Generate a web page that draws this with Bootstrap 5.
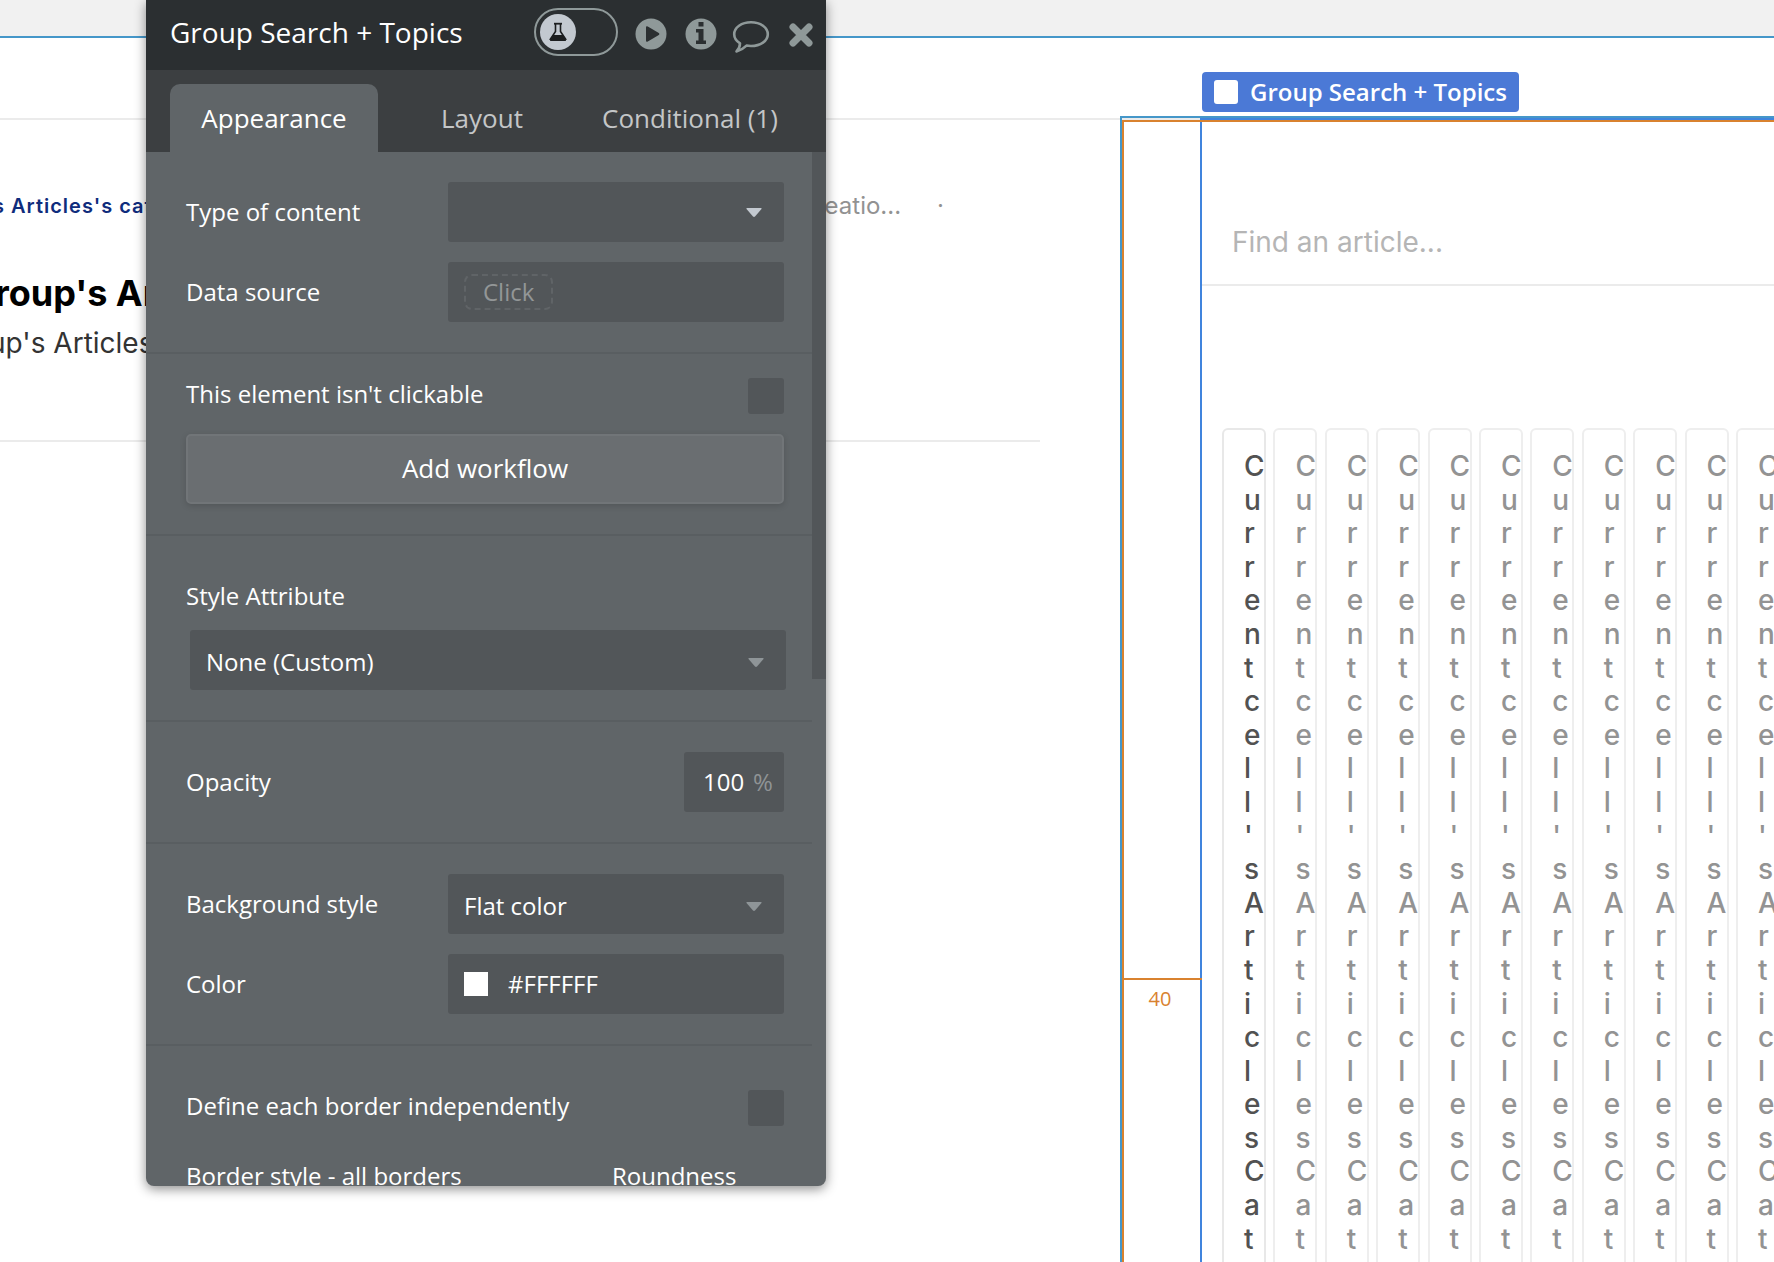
<!DOCTYPE html>
<html lang="en">
<head>
<meta charset="utf-8">
<meta name="viewport" content="width=device-width, initial-scale=1">
<title>Group Search + Topics</title>
<link href="https://cdn.jsdelivr.net/npm/bootstrap@5.3.0/dist/css/bootstrap.min.css" rel="stylesheet">
<style>
  :root {
    --line: #ebebeb;
    --outline: #4597c9;
    --select: #4084dd;
    --spacing: #d9822f;
    --field: #525659;
    --surface: #606568;
    --icon: #8f9999;
  }
  body { font-family: Inter, "Liberation Sans", sans-serif; background: #fff; color: #000; }

  /* Canvas */
  .stage { height: 100vh; }
  .stage-top { height: 38px; background: #f1f1f1; border-bottom: 2px solid var(--outline); }
  .page-head { height: 82px; border-bottom: 2px solid var(--line); }
  .article { height: 322px; padding-top: 71px; margin-right: 80px; border-bottom: 2px solid var(--line); white-space: nowrap; }
  .article-meta { font-size: 24px; line-height: 30px; color: #929292; padding-right: 96px; }
  .article-cat { font-size: 20px; font-weight: 600; letter-spacing: 1px; color: #0f2c7c; margin-left: -7px; }
  .article-title { font-size: 36px; font-weight: 700; line-height: 44px; margin: 50px 0 0 -5px; }
  .article-text { font-size: 28px; line-height: 34px; color: #333; margin: 11px 0 0 -11px; }
  .dot-gap { gap: 36px; }

  /* Selected column */
  .side { width: 654px; margin-top: -4px; border-left: 2px solid var(--outline); border-top: 2px solid var(--outline); }
  .spacing-frame { inset: 2px 0 0 0; border-left: 2px solid var(--spacing); border-top: 2px solid var(--spacing); pointer-events: none; }
  .spacing-mark { top: 860px; left: 2px; width: 78px; border-top: 2px solid var(--spacing); color: var(--spacing); font: 20px/26px "Open Sans", sans-serif; padding: 6px 6px 0 0; }
  .group { margin-left: 78px; border-left: 2px solid var(--select); border-top: 2px solid var(--select); }
  .tag { top: -46px; left: 80px; height: 40px; padding: 0 12px; gap: 12px; border-radius: 4px; background: #4b79d6; color: #fff; font: 600 24px/40px "Open Sans", sans-serif; white-space: nowrap; }
  .tag-box { width: 24px; height: 24px; border-radius: 3px; background: #fff; }
  .search { margin-top: 80px; height: 86px; padding: 0 30px; border: 0; border-bottom: 2px solid var(--line); border-radius: 0; font-size: 28px; }
  .search::placeholder { color: #b5b5b5; }
  .topics { margin: 142px -6px -12px 20px; }
  .topic { width: 44px; padding: 20px 19px 20px 20px; border: 2px solid #eee; border-radius: 6px; font-size: 28px; font-weight: 500; line-height: 1.2; line-break: anywhere; word-break: break-all; color: #939393; }
  .topic:first-child { border-color: #e8e8e8; color: #525252; }

  /* Property editor */
  .editor { top: 0; left: 146px; width: 680px; height: calc(100vh - 76px); border-radius: 0 0 8px 8px; background: var(--surface); box-shadow: 0 3px 12px rgba(0,0,0,.45); font: 24px/34px "Open Sans", "Noto Sans", sans-serif; color: #fff; }
  .editor-title { height: 70px; padding: 0 12px 6px 24px; background: #2b2f31; flex: none; }
  .editor-title h1 { font-size: 28px; line-height: 38px; font-weight: 400; }
  .tool { border: 0; padding: 0; background: none; display: block; }
  .tools { gap: 14px; }
  .mode { appearance: none; width: 84px; height: 48px; border: 2px solid var(--icon); border-radius: 24px; background: none; margin: 0; display: block; }
  .flask { left: 6px; top: 6px; pointer-events: none; }
  .editor-tabs { height: 82px; padding: 14px 24px 0; background: #3c3f41; flex: none; }
  .editor-tabs .nav-link { height: 68px; padding: 0; border: 0; border-radius: 10px 10px 0 0; width: 208px; font-size: 26px; line-height: 68px; color: #c4c6c7; }
  .editor-tabs .nav-link.active { background: var(--surface); color: #fff; }
  .thumb { width: 14px; height: 527px; background: var(--field); }
  .sect { padding: 30px 28px 30px 40px; border-bottom: 2px solid #595e61; }
  .stack { gap: 20px; }
  .ctl { height: 60px; width: 336px; border: 0; border-radius: 3px; background-color: var(--field); color: #fff; font-size: 24px; line-height: 34px; padding: 0 16px; }
  .ctl:focus { background-color: var(--field); color: #fff; }
  select.ctl { padding-top: 3px; background-position: right 22px top 28px; background-size: 16px 9px;
    --bs-form-select-bg-img: url("data:image/svg+xml,%3csvg xmlns='http://www.w3.org/2000/svg' viewBox='0 0 16 9'%3e%3cpath fill='%238f9598' d='M1 0h14q1 0 .5 1L9 8.500q-1 .8-2 0L.5 1Q0 0 1 0z'/%3e%3c/svg%3e"); }
  select.ctl.fresh { background-position: right 22px top 26px; --bs-form-select-bg-img: url("data:image/svg+xml,%3csvg xmlns='http://www.w3.org/2000/svg' viewBox='0 0 16 9'%3e%3cpath fill='%23c3c9d0' d='M1 0h14q1 0 .5 1L9 8.500q-1 .8-2 0L.5 1Q0 0 1 0z'/%3e%3c/svg%3e"); }
  .click { height: 36px; padding: 0 17px; border: 2px dashed #606467; border-radius: 8px; background: none; color: #939697; line-height: 32px; }
  .tick { appearance: none; width: 36px; height: 36px; margin: 0; border-radius: 3px; background: var(--field); flex: none; }
  .tick-label { line-height: 32px; padding-bottom: 4px; }
  .workflow { height: 70px; padding: 4px 12px 6px; border: 2px solid #717578; border-radius: 5px; background: #6a6e71; color: #fff; font-size: 26px; box-shadow: 0 2px 6px rgba(0,0,0,.15); }
  .workflow:hover { background: #717578; color: #fff; }
  .style-label { padding: 13px 0 17px; }
  .style-ctl { width: calc(100% - 2px); margin-left: 4px; }
  .percent { width: 100px; padding: 0 10px 0 19px; }
  .percent input { width: 50px; }
  .bare { border: 0; padding: 0; background: none; color: #fff; min-width: 0; outline: 0; }
  .swatch { width: 24px; height: 24px; background: #fff; margin-right: 20px; flex: none; }
  .unit { color: #8f9395; }
  .sect-last { padding-top: 44px; padding-bottom: 0; border-bottom: 0; }
  .last-row { margin-top: 33px; }
  .last-main { width: 426px; }
</style>
</head>
<body class="overflow-hidden">
<div class="stage d-flex flex-column position-relative overflow-hidden">
  <div class="stage-top flex-shrink-0"></div>
  <header class="page-head flex-shrink-0"></header>
  <main class="d-flex flex-grow-1">
    <section class="flex-grow-1">
      <article class="article">
        <div class="article-meta d-flex justify-content-between align-items-center">
          <a class="article-cat text-decoration-none" href="#">s Articles's cat</a>
          <span class="d-flex dot-gap"><span>Creatio...</span><span>·</span></span>
        </div>
        <h2 class="article-title">roup's Ar</h2>
        <p class="article-text">up's Articles</p>
      </article>
    </section>

    <aside class="side position-relative d-flex flex-column flex-shrink-0">
      <div class="tag position-absolute d-flex align-items-center"><span class="tag-box"></span>Group Search + Topics</div>
      <div class="group flex-grow-1 d-flex flex-column">
        <input class="search form-control shadow-none flex-shrink-0" type="search" placeholder="Find an article..." aria-label="Find an article">
        <div class="topics d-flex justify-content-between flex-grow-1">
          <div class="topic">Current cell's Articles Cat</div>
          <div class="topic">Current cell's Articles Cat</div>
          <div class="topic">Current cell's Articles Cat</div>
          <div class="topic">Current cell's Articles Cat</div>
          <div class="topic">Current cell's Articles Cat</div>
          <div class="topic">Current cell's Articles Cat</div>
          <div class="topic">Current cell's Articles Cat</div>
          <div class="topic">Current cell's Articles Cat</div>
          <div class="topic">Current cell's Articles Cat</div>
          <div class="topic">Current cell's Articles Cat</div>
          <div class="topic">Current cell's Articles Cat</div>
        </div>
      </div>
      <div class="spacing-frame position-absolute"></div>
      <div class="spacing-mark position-absolute text-center">40</div>
    </aside>
  </main>

  <div class="editor position-absolute d-flex flex-column overflow-hidden">
    <div class="editor-title d-flex align-items-center justify-content-between">
      <h1 class="m-0">Group Search + Topics</h1>
      <div class="tools d-flex align-items-center">
        <div class="position-relative">
          <input class="mode" type="checkbox" role="switch" aria-label="Experimental mode">
          <svg class="flask position-absolute" width="36" height="36" viewBox="0 0 36 36"><circle cx="18" cy="18" r="18" fill="#c3c9d0"/><path d="M15.500 10v7.500l-5 7.500h15l-5-7.500V10" fill="none" stroke="#1c1e1f" stroke-width="1.600"/><path d="M14 9.700h8" stroke="#1c1e1f" stroke-width="1.800"/><path d="M13 21h10l3 4.500q.5 1.500-1 1.500H11q-1.500 0-1-1.500z" fill="#1c1e1f"/></svg>
        </div>
        <button class="tool" type="button" aria-label="Preview"><svg width="36" height="36" viewBox="0 0 36 36" class="d-block"><circle cx="19" cy="20" r="15.500" fill="#8f9999"/><path d="M14 13.500q0-2 1.800-1l11 6.500q1.400 1 0 2l-11 6.500q-1.800 1-1.800-1z" fill="#2b2f31"/></svg></button>
        <button class="tool" type="button" aria-label="Information"><svg width="36" height="36" viewBox="0 0 36 36" class="d-block"><circle cx="19" cy="20" r="15.500" fill="#8f9999"/><path d="M16.500 8h5v4.500h-5zM14 15h7.500v11.500H24V30H14v-3.500h2.500v-8H14z" fill="#2b2f31"/></svg></button>
        <button class="tool" type="button" aria-label="Comment"><svg width="38" height="36" viewBox="0 0 38 36" class="d-block overflow-visible"><path d="M19 8.200c9.500 0 16.800 5.300 16.800 12S28.500 32 19 32q-2.500 0-4.500-.4Q10 36 4.500 37.500q3.500-3.500 3.500-8.200-5.800-3.700-5.800-9.100c0-6.700 7.300-12 16.800-12z" fill="none" stroke="#8f9999" stroke-width="2.600" stroke-linejoin="round"/></svg></button>
        <button class="tool" type="button" aria-label="Close"><svg width="30" height="36" viewBox="0 0 30 36" class="d-block"><path d="M9 13l16 16M25 13l-16 16" stroke="#8f9999" stroke-width="7" stroke-linecap="round"/></svg></button>
      </div>
    </div>

    <nav class="editor-tabs nav nav-tabs border-0 flex-nowrap">
      <button class="nav-link active" type="button">Appearance</button>
      <button class="nav-link" type="button">Layout</button>
      <button class="nav-link" type="button">Conditional (1)</button>
    </nav>

    <div class="d-flex flex-grow-1 overflow-hidden">
      <form class="flex-grow-1">
        <div class="sect stack d-flex flex-column">
          <div class="d-flex align-items-center justify-content-between">
            <label for="type">Type of content</label>
            <select id="type" class="ctl fresh form-select shadow-none"><option></option></select>
          </div>
          <div class="d-flex align-items-center justify-content-between">
            <span>Data source</span>
            <div class="ctl d-flex align-items-center"><button class="click" type="button">Click</button></div>
          </div>
        </div>

        <div class="sect stack d-flex flex-column pt-4">
          <div class="d-flex align-items-center justify-content-between">
            <label class="tick-label" for="noclick">This element isn't clickable</label>
            <input class="tick" type="checkbox" id="noclick">
          </div>
          <button class="workflow btn w-100" type="button">Add workflow</button>
        </div>

        <div class="sect d-flex flex-column">
          <label class="style-label" for="attribute">Style Attribute</label>
          <select id="attribute" class="ctl style-ctl form-select shadow-none"><option>None (Custom)</option></select>
        </div>

        <div class="sect d-flex align-items-center justify-content-between">
          <label for="opacity">Opacity</label>
          <div class="ctl percent d-flex align-items-center">
            <input id="opacity" class="bare" type="text" value="100"><span class="unit">%</span>
          </div>
        </div>

        <div class="sect stack d-flex flex-column">
          <div class="d-flex align-items-center justify-content-between">
            <label for="bg">Background style</label>
            <select id="bg" class="ctl form-select shadow-none"><option>Flat color</option></select>
          </div>
          <div class="d-flex align-items-center justify-content-between">
            <label for="color">Color</label>
            <div class="ctl d-flex align-items-center"><span class="swatch"></span><input id="color" class="bare w-100" type="text" value="#FFFFFF"></div>
          </div>
        </div>

        <div class="sect sect-last">
          <div class="d-flex align-items-center justify-content-between">
            <label class="tick-label" for="borders">Define each border independently</label>
            <input class="tick" type="checkbox" id="borders">
          </div>
          <div class="last-row d-flex">
            <span class="last-main">Border style - all borders</span>
            <span>Roundness</span>
          </div>
        </div>
      </form>
      <div class="thumb flex-shrink-0"></div>
    </div>
  </div>
</div>
<script src="https://cdn.jsdelivr.net/npm/bootstrap@5.3.0/dist/js/bootstrap.bundle.min.js"></script>
</body>
</html>
